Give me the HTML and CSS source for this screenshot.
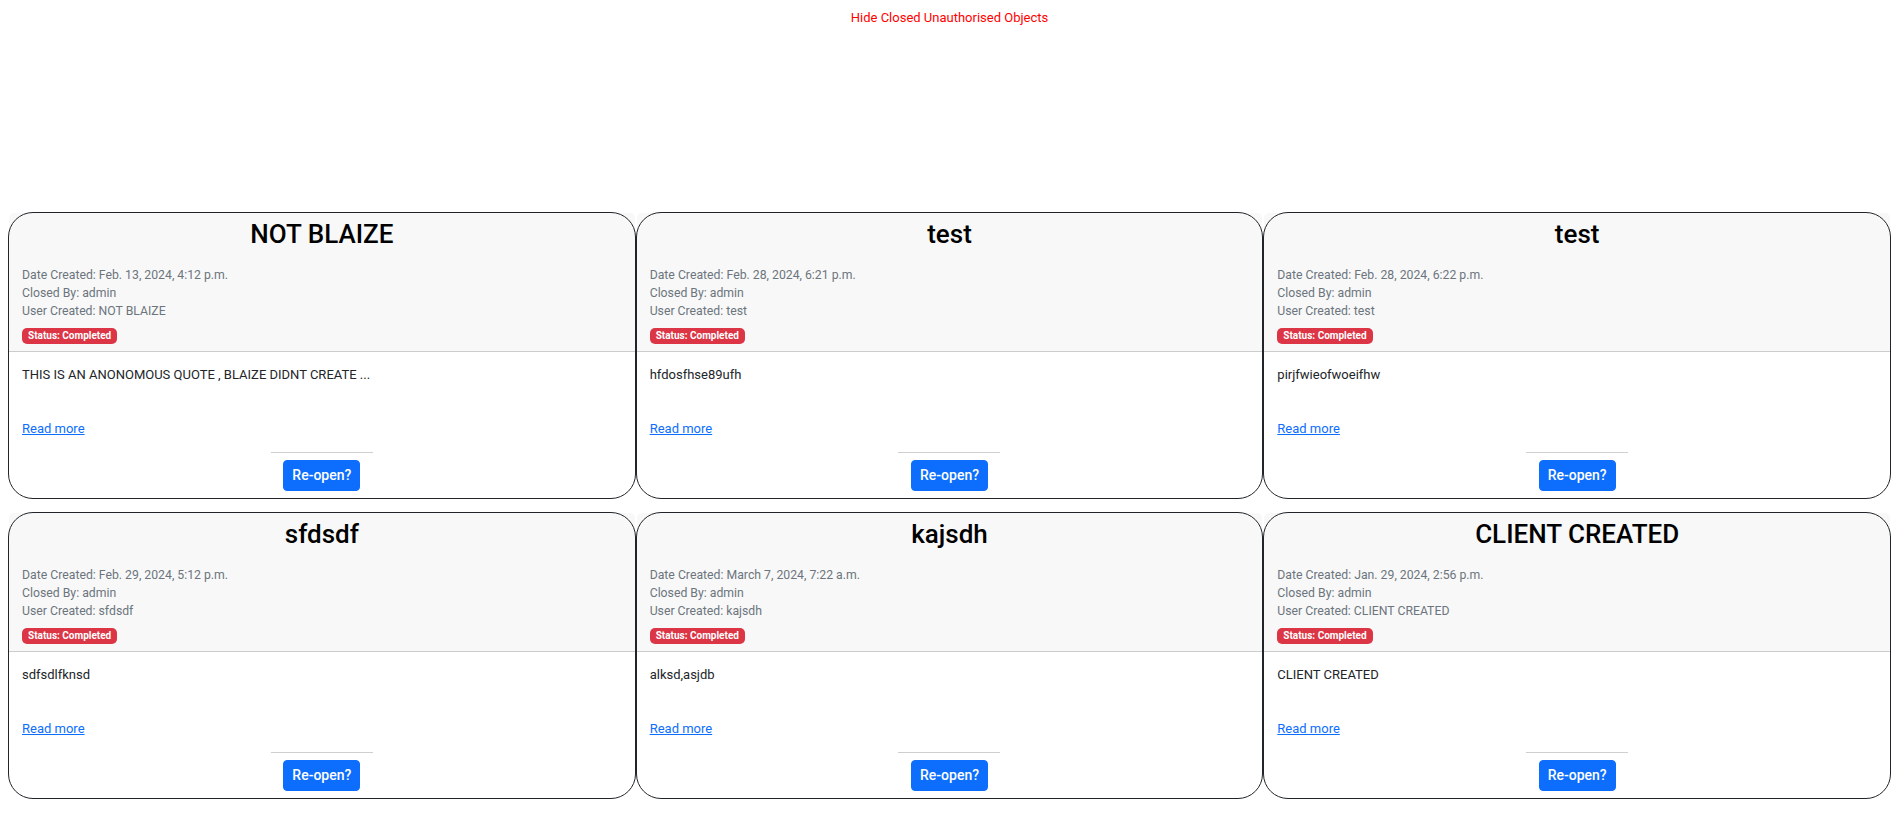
FILE: index.html
```html
<!DOCTYPE html>
<html lang="en">
<head>
<meta charset="utf-8">
<title>Closed Objects</title>
<link rel="stylesheet" href="styles.css">
</head>
<body>
<div class="page">
  <div class="toggle"><a class="toggle-link" href="#">Hide Closed Unauthorised Objects</a></div>
  <div class="grid">
    <div class="card">
      <div class="card-header">
        <h4 class="title">NOT BLAIZE</h4>
        <div class="meta">Date Created: Feb. 13, 2024, 4:12 p.m.</div>
        <div class="meta">Closed By: admin</div>
        <div class="meta">User Created: NOT BLAIZE</div>
        <span class="badge">Status: Completed</span>
      </div>
      <div class="card-body">
        <p class="text">THIS IS AN ANONOMOUS QUOTE , BLAIZE DIDNT CREATE ...</p>
        <a class="more" href="#">Read more</a>
        <div class="actions"><hr class="rule"><button class="btn">Re-open?</button></div>
      </div>
    </div>
    <div class="card">
      <div class="card-header">
        <h4 class="title">test</h4>
        <div class="meta">Date Created: Feb. 28, 2024, 6:21 p.m.</div>
        <div class="meta">Closed By: admin</div>
        <div class="meta">User Created: test</div>
        <span class="badge">Status: Completed</span>
      </div>
      <div class="card-body">
        <p class="text">hfdosfhse89ufh</p>
        <a class="more" href="#">Read more</a>
        <div class="actions"><hr class="rule"><button class="btn">Re-open?</button></div>
      </div>
    </div>
    <div class="card">
      <div class="card-header">
        <h4 class="title">test</h4>
        <div class="meta">Date Created: Feb. 28, 2024, 6:22 p.m.</div>
        <div class="meta">Closed By: admin</div>
        <div class="meta">User Created: test</div>
        <span class="badge">Status: Completed</span>
      </div>
      <div class="card-body">
        <p class="text">pirjfwieofwoeifhw</p>
        <a class="more" href="#">Read more</a>
        <div class="actions"><hr class="rule"><button class="btn">Re-open?</button></div>
      </div>
    </div>
    <div class="card">
      <div class="card-header">
        <h4 class="title">sfdsdf</h4>
        <div class="meta">Date Created: Feb. 29, 2024, 5:12 p.m.</div>
        <div class="meta">Closed By: admin</div>
        <div class="meta">User Created: sfdsdf</div>
        <span class="badge">Status: Completed</span>
      </div>
      <div class="card-body">
        <p class="text">sdfsdlfknsd</p>
        <a class="more" href="#">Read more</a>
        <div class="actions"><hr class="rule"><button class="btn">Re-open?</button></div>
      </div>
    </div>
    <div class="card">
      <div class="card-header">
        <h4 class="title">kajsdh</h4>
        <div class="meta">Date Created: March 7, 2024, 7:22 a.m.</div>
        <div class="meta">Closed By: admin</div>
        <div class="meta">User Created: kajsdh</div>
        <span class="badge">Status: Completed</span>
      </div>
      <div class="card-body">
        <p class="text">alksd,asjdb</p>
        <a class="more" href="#">Read more</a>
        <div class="actions"><hr class="rule"><button class="btn">Re-open?</button></div>
      </div>
    </div>
    <div class="card">
      <div class="card-header">
        <h4 class="title">CLIENT CREATED</h4>
        <div class="meta">Date Created: Jan. 29, 2024, 2:56 p.m.</div>
        <div class="meta">Closed By: admin</div>
        <div class="meta">User Created: CLIENT CREATED</div>
        <span class="badge">Status: Completed</span>
      </div>
      <div class="card-body">
        <p class="text">CLIENT CREATED</p>
        <a class="more" href="#">Read more</a>
        <div class="actions"><hr class="rule"><button class="btn">Re-open?</button></div>
      </div>
    </div>
  </div>
</div>
</body>
</html>
```
FILE: styles.css
```css
* { box-sizing: border-box; }
html, body { margin: 0; padding: 0; background: #fff; }
body {
  font-family: Roboto, "Liberation Sans", Arial, sans-serif;
  color: #212529;
  font-size: 13px;
}
.page {
  padding: 0 4px 0 8px;
}
.toggle {
  padding-top: 8px;
  text-align: center;
  font-size: 13px;
  line-height: 19.5px;
}
.toggle-link {
  color: #ff0000;
  text-decoration: none;
}
.grid {
  margin-top: 184.5px;
  display: grid;
  grid-template-columns: repeat(3, 1fr);
  row-gap: 13px;
}
.card {
  border: 1px solid #212529;
  border-radius: 25px;
  background: #fff;
  display: flex;
  flex-direction: column;
}
.card-header {
  background: rgba(33, 37, 41, 0.03);
  border-bottom: 1px solid rgba(0, 0, 0, 0.175);
  border-radius: 5px 5px 0 0;
  padding: 6px 13px 7px;
}
.title {
  margin: 0 0 16px;
  font-size: 26px;
  font-weight: 500;
  line-height: 31.2px;
  text-align: center;
  color: #000;
}
.meta {
  font-size: 12.25px;
  line-height: 18px;
  color: #6c757d;
}
.badge {
  display: block;
  width: max-content;
  margin-top: 8px;
  background: #dc3545;
  color: #fff;
  font-size: 10px;
  font-weight: 700;
  line-height: 10px;
  padding: 3px 6px;
  border-radius: 5px;
}
.card-body {
  padding: 13px 13px 7px;
}
.text {
  margin: 0 0 34px;
  font-size: 13px;
  line-height: 19.5px;
}
.more {
  display: block;
  width: max-content;
  font-size: 13px;
  line-height: 19.5px;
  color: #0d6efd;
  text-decoration: underline;
}
.actions {
  display: flex;
  flex-direction: column;
  align-items: center;
}
.rule {
  width: 102px;
  margin: 14px 0 7px;
  border: 0;
  border-top: 1px solid #cfcfcf;
  height: 0;
}
.btn {
  font-family: Roboto, "Liberation Sans", Arial, sans-serif;
  font-size: 14px;
  font-weight: 500;
  line-height: 21px;
  padding: 4px 8px;
  color: #fff;
  background: #0d6efd;
  border: 1px solid #0d6efd;
  border-radius: 4px;
  cursor: pointer;
}
```
